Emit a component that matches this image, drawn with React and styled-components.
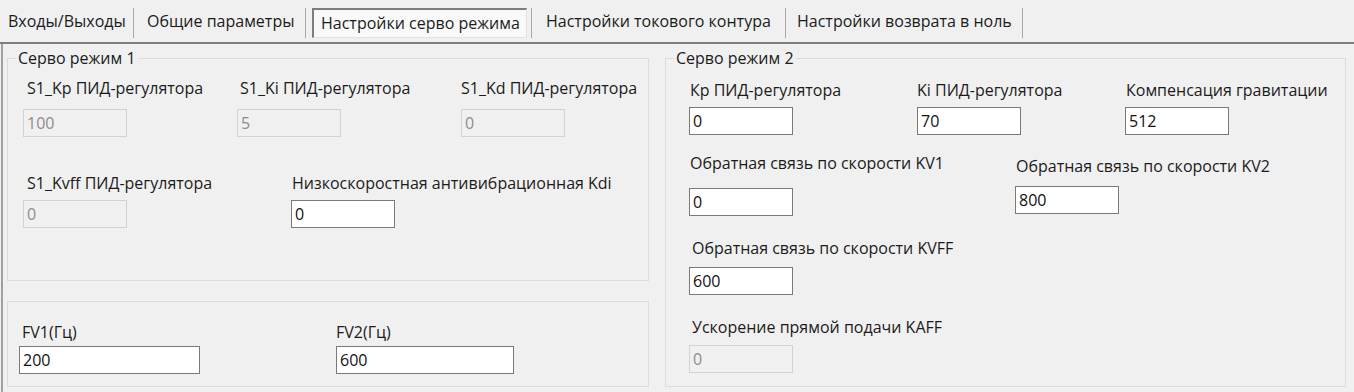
import React from "react";
import styled, { createGlobalStyle } from "styled-components";

const GlobalStyle = createGlobalStyle`
  html, body {
    margin: 0;
    padding: 0;
    background: #f0f0f0;
  }
  body {
    font-family: "Open Sans", "Noto Sans", sans-serif;
    font-size: 16px;
    color: #1b1b1b;
  }
`;

const Window = styled.div`
  width: 1354px;
  height: 392px;
  overflow: hidden;
  background: #f0f0f0;
`;

const TabBar = styled.div`
  display: flex;
  align-items: center;
  height: 42px;
  border-bottom: 2px solid #7e7e7e;
  box-sizing: content-box;
`;

const Tab = styled.div`
  position: relative;
  box-sizing: border-box;
  width: ${(p) => p.$w}px;
  height: 42px;
  display: flex;
  align-items: center;
  padding-left: ${(p) => p.$pl}px;
  white-space: nowrap;
  &::after {
    content: "";
    position: absolute;
    right: 0;
    top: 8px;
    bottom: 4px;
    border-right: 1px solid #a9a9a9;
  }
`;

const ActiveLabel = styled.div`
  box-sizing: border-box;
  height: 30px;
  width: 215px;
  display: flex;
  align-items: center;
  padding-left: 7px;
  margin-top: 3px;
  background: #f9f9f9;
  border-top: 2px solid #7d7d7d;
  border-left: 2px solid #7d7d7d;
  border-right: 1px solid #e2e2e2;
  border-bottom: 1px solid #e2e2e2;
`;

const Page = styled.div`
  display: flex;
  gap: 16px;
  margin-left: 1px;
  border-left: 2px solid #a0a0a0;
  padding: 5px 0 0 4px;
  height: 348px;
`;

const Column = styled.div`
  display: flex;
  flex-direction: column;
  gap: ${(p) => p.$gap || 0}px;
  width: ${(p) => p.$w}px;
`;

const GroupBox = styled.fieldset`
  margin: 0;
  padding: 0;
  border: 1px solid #dcdcdc;
  height: ${(p) => p.$h}px;
  box-sizing: border-box;
  min-width: 0;
`;

const Legend = styled.legend`
  margin-left: 8px;
  padding: 0 2px;
  line-height: 18px;
`;

const PlainBox = styled.div`
  border: 1px solid #dcdcdc;
  height: ${(p) => p.$h}px;
  box-sizing: border-box;
  padding-top: ${(p) => p.$pt}px;
`;

const Row = styled.div`
  display: flex;
  align-items: flex-start;
  margin-top: ${(p) => p.$mt || 0}px;
  padding-left: ${(p) => p.$pl || 0}px;
`;

const Field = styled.div`
  display: flex;
  flex-direction: column;
  flex: none;
  width: ${(p) => (p.$w ? `${p.$w}px` : "auto")};
  margin-top: ${(p) => p.$mt || 0}px;
  gap: ${(p) => p.$gap}px;
`;

const Label = styled.label`
  line-height: 20px;
  height: 20px;
  padding-left: ${(p) => p.$pl || 0}px;
  white-space: nowrap;
`;

const Input = styled.input`
  box-sizing: border-box;
  width: ${(p) => p.$w || 104}px;
  height: 28px;
  margin: 0;
  padding: 0 0 0 3px;
  font: inherit;
  font-size: 16px;
  color: #111;
  background: #ffffff;
  border: 1px solid #7a7a7a;
  outline: none;
  &:disabled {
    background: #f0f0f0;
    border-color: #d2d2d2;
    color: #8d8d8d;
  }
`;

const TextField = ({ label, value, w, iw, gap, lpl, mt, disabled }) => (
  <Field $w={w} $gap={gap} $mt={mt}>
    <Label $pl={lpl}>{label}</Label>
    <Input $w={iw} defaultValue={value} disabled={disabled} readOnly={disabled} />
  </Field>
);

export default function App() {
  return (
    <Window>
      <GlobalStyle />
      <TabBar>
        <Tab $w={134} $pl={8}>Входы/Выходы</Tab>
        <Tab $w={172} $pl={13}>Общие параметры</Tab>
        <Tab $w={226} $pl={6}>
          <ActiveLabel>Настройки серво режима</ActiveLabel>
        </Tab>
        <Tab $w={254} $pl={14}>Настройки токового контура</Tab>
        <Tab $w={237} $pl={11}>Настройки возврата в ноль</Tab>
      </TabBar>

      <Page>
        <Column $w={642} $gap={20}>
          <GroupBox $h={232}>
            <Legend>Серво режим 1</Legend>
            <Row $mt={11} $pl={15}>
              <TextField w={214} lpl={4} gap={11} label="S1_Kp ПИД-регулятора" value="100" disabled />
              <TextField w={224} lpl={3} gap={11} label="S1_Ki ПИД-регулятора" value="5" disabled />
              <TextField lpl={0} gap={11} label="S1_Kd ПИД-регулятора" value="0" disabled />
            </Row>
            <Row $mt={36} $pl={15}>
              <TextField w={268} lpl={4} gap={7} label="S1_Kvff ПИД-регулятора" value="0" disabled />
              <TextField lpl={1} gap={7} label="Низкоскоростная антивибрационная Kdi" value="0" />
            </Row>
          </GroupBox>
          <PlainBox $h={86} $pt={20}>
            <Row $pl={11}>
              <TextField w={317} lpl={3} gap={4} iw={181} label="FV1(Гц)" value="200" />
              <TextField lpl={0} gap={4} iw={178} label="FV2(Гц)" value="600" />
            </Row>
          </PlainBox>
        </Column>

        <Column $w={681}>
          <GroupBox $h={338}>
            <Legend>Серво режим 2</Legend>
            <Row $mt={13} $pl={23}>
              <TextField w={228} lpl={1} gap={7} label="Кр ПИД-регулятора" value="0" />
              <TextField w={208} lpl={0} gap={7} label="Ki ПИД-регулятора" value="70" />
              <TextField lpl={1} gap={7} label="Компенсация гравитации" value="512" />
            </Row>
            <Row $mt={18} $pl={23}>
              <TextField w={326} lpl={1} gap={15} label="Обратная связь по скорости KV1" value="0" />
              <TextField mt={3} lpl={1} gap={10} label="Обратная связь по скорости KV2" value="800" />
            </Row>
            <Row $mt={22} $pl={23}>
              <TextField lpl={3} gap={9} label="Обратная связь по скорости KVFF" value="600" />
            </Row>
            <Row $mt={22} $pl={23}>
              <TextField lpl={3} gap={8} label="Ускорение прямой подачи KAFF" value="0" disabled />
            </Row>
          </GroupBox>
        </Column>
      </Page>
    </Window>
  );
}
